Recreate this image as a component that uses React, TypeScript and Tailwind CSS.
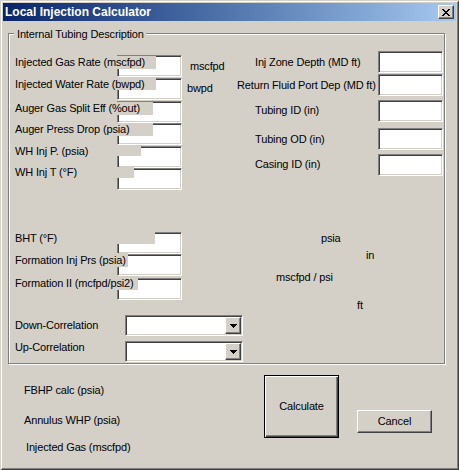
import React from "react";

const LBL = "relative z-10 bg-[#d4d0c8] whitespace-nowrap shrink-0";
const BOX =
  "bg-white border border-t-[#808080] border-l-[#808080] border-b-white border-r-white shadow-[inset_1px_1px_0_#404040,inset_-1px_-1px_0_#d4d0c8]";
const RAISED =
  "bg-[#d4d0c8] border border-t-white border-l-white border-b-[#404040] border-r-[#404040] shadow-[inset_-1px_-1px_0_#808080]";

function Combo() {
  return (
    <div className={`${BOX} w-[118px] h-[21px] flex shrink-0`}>
      <div className={`${RAISED} ml-auto mt-[1px] mr-[1px] w-[16px] h-[17px] flex items-center justify-center`}>
        <svg width="7" height="4" viewBox="0 0 7 4" shapeRendering="crispEdges">
          <path d="M0 0h7v1h-1v1h-1v1h-1v1h-1v-1h-1v-1h-1v-1h-1z" fill="#000" />
        </svg>
      </div>
    </div>
  );
}

export default function App() {
  return (
    <div className="w-[459px] h-[470px] box-border bg-[#d4d0c8] p-[3px] shadow-[inset_1px_1px_0_#d4d0c8,inset_-1px_-1px_0_#404040,inset_2px_2px_0_#ffffff,inset_-2px_-2px_0_#808080] text-[11px] tracking-[-0.15px] text-black font-['Liberation_Sans',Arial,sans-serif] flex flex-col">
      {/* Title bar */}
      <div className="h-[18px] flex items-center justify-between bg-linear-to-r from-[#0a246a] to-[#a6caf0] pl-[2px] pr-[2px]">
        <span className="text-white font-bold text-[12px] tracking-normal leading-[18px] whitespace-nowrap">
          Local Injection Calculator
        </span>
        <div className={`${RAISED} w-[16px] h-[14px] flex items-center justify-center`}>
          <svg width="8" height="7" viewBox="0 0 8 7" shapeRendering="crispEdges">
            <path
              d="M0 0h2v1h1v1h2v-1h1v-1h2v1h-1v1h-1v1h-1v1h1v1h1v1h1v1h-2v-1h-1v-1h-2v1h-1v1h-2v-1h1v-1h1v-1h1v-1h-1v-1h-1v-1h-1z"
              fill="#000"
            />
          </svg>
        </div>
      </div>

      {/* Frame */}
      <div className="relative mt-[12px] ml-[5px] w-[437px] h-[331px] box-border border border-[#808080] shadow-[inset_1px_1px_0_#ffffff,1px_1px_0_#ffffff] flex">
        <div className="absolute left-[5px] -top-[6px] bg-[#d4d0c8] pl-[3px] pr-[2px] leading-[13px] whitespace-nowrap">
          Internal Tubing Description
        </div>

        {/* Left column */}
        <div className="ml-[6px] mt-[21px] w-[222px] shrink-0 flex flex-col">
          <div className="flex items-start h-[23px]">
            <div className={`${LBL} mt-[1px] w-[141px] h-[13px] leading-[13px]`}>Injected Gas Rate (mscfpd)</div>
            <div className={`${BOX} -ml-[39px] w-[65px] h-[22px] shrink-0`} />
            <div className="ml-[8px] mt-[5px] leading-[13px] whitespace-nowrap">mscfpd</div>
          </div>
          <div className="flex items-start h-[23px]">
            <div className={`${LBL} w-[141px] h-[12px] leading-[12px]`}>Injected Water Rate (bwpd)</div>
            <div className={`${BOX} -ml-[39px] w-[65px] h-[22px] shrink-0`} />
            <div className="ml-[5px] mt-[4px] leading-[13px] whitespace-nowrap">bwpd</div>
          </div>
          <div className="flex items-start h-[22px]">
            <div className={`${LBL} mt-[1px] w-[138px] h-[13px] leading-[13px]`}>Auger Gas Split Eff (%out)</div>
            <div className={`${BOX} -ml-[36px] w-[65px] h-[22px] shrink-0`} />
          </div>
          <div className="flex items-start h-[23px]">
            <div className={`${LBL} w-[138px] h-[13px] leading-[13px]`}>Auger Press Drop (psia)</div>
            <div className={`${BOX} -ml-[36px] w-[65px] h-[22px] shrink-0`} />
          </div>
          <div className="flex items-start h-[21px]">
            <div className={`${LBL} w-[126px] h-[10px] leading-[10px]`}>WH Inj P. (psia)</div>
            <div className={`${BOX} -ml-[24px] w-[65px] h-[22px] shrink-0`} />
          </div>
          <div className="flex items-start h-[23px]">
            <div className={`${LBL} w-[119px] h-[11px] leading-[11px]`}>WH Inj T (°F)</div>
            <div className={`${BOX} -ml-[17px] mt-[1px] w-[65px] h-[22px] shrink-0`} />
          </div>

          <div className="flex items-start h-[21px] mt-[42px]">
            <div className={`${LBL} w-[140px] h-[12px] leading-[12px]`}>BHT (°F)</div>
            <div className={`${BOX} -ml-[38px] w-[65px] h-[22px] shrink-0`} />
          </div>
          <div className="flex items-start h-[24px]">
            <div className={`${LBL} w-[113px] h-[14px] leading-[14px]`}>Formation Inj Prs (psia)</div>
            <div className={`${BOX} -ml-[11px] mt-[1px] w-[65px] h-[22px] shrink-0`} />
          </div>
          <div className="flex items-start h-[23px]">
            <div className={`${LBL} w-[123px] h-[13px] leading-[13px]`}>Formation II (mcfpd/psi2)</div>
            <div className={`${BOX} -ml-[21px] mt-[1px] w-[65px] h-[22px] shrink-0`} />
          </div>

          <div className="flex items-start h-[26px] mt-[15px]">
            <div className="w-[110px] shrink-0 mt-[4px] leading-[13px] whitespace-nowrap">Down-Correlation</div>
            <Combo />
          </div>
          <div className="flex items-start h-[21px]">
            <div className="w-[110px] shrink-0 leading-[13px] whitespace-nowrap">Up-Correlation</div>
            <Combo />
          </div>
        </div>

        {/* Right column */}
        <div className="mt-[17px] w-[207px] shrink-0 flex flex-col">
          <div className="flex items-start h-[23px]">
            <div className="w-[141px] shrink-0 pl-[18px] mt-[5px] leading-[13px] whitespace-nowrap">Inj Zone Depth (MD ft)</div>
            <div className={`${BOX} w-[65px] h-[22px] shrink-0`} />
          </div>
          <div className="flex items-start h-[26px]">
            <div className="w-[141px] shrink-0 mt-[5px] leading-[13px] whitespace-nowrap">Return Fluid Port Dep (MD ft)</div>
            <div className={`${BOX} w-[65px] h-[22px] shrink-0`} />
          </div>
          <div className="flex items-start h-[28px]">
            <div className="w-[141px] shrink-0 pl-[18px] mt-[4px] leading-[13px] whitespace-nowrap">Tubing ID (in)</div>
            <div className={`${BOX} w-[65px] h-[22px] shrink-0`} />
          </div>
          <div className="flex items-start h-[26px]">
            <div className="w-[141px] shrink-0 pl-[18px] mt-[5px] leading-[13px] whitespace-nowrap">Tubing OD (in)</div>
            <div className={`${BOX} w-[65px] h-[22px] shrink-0`} />
          </div>
          <div className="flex items-start h-[22px]">
            <div className="w-[141px] shrink-0 pl-[18px] mt-[4px] leading-[13px] whitespace-nowrap">Casing ID (in)</div>
            <div className={`${BOX} w-[65px] h-[22px] shrink-0`} />
          </div>

          <div className="mt-[56px] ml-[84px] leading-[13px] whitespace-nowrap">psia</div>
          <div className="mt-[4px] ml-[129px] leading-[13px] whitespace-nowrap">in</div>
          <div className="mt-[9px] ml-[39px] leading-[13px] whitespace-nowrap">mscfpd / psi</div>
          <div className="mt-[15px] ml-[120px] leading-[13px] whitespace-nowrap">ft</div>
        </div>
      </div>

      {/* Bottom area */}
      <div className="flex items-start">
        <div className="w-[261px] shrink-0 pl-[21px] flex flex-col">
          <div className="mt-[20px] leading-[13px] whitespace-nowrap">FBHP calc (psia)</div>
          <div className="mt-[17px] leading-[13px] whitespace-nowrap">Annulus WHP (psia)</div>
          <div className="mt-[14px] ml-[2px] leading-[13px] whitespace-nowrap">Injected Gas (mscfpd)</div>
        </div>
        <button className="shrink-0 mt-[11px] w-[75px] h-[63px] box-border bg-[#d4d0c8] border border-black shadow-[inset_1px_1px_0_#ffffff,inset_-1px_-1px_0_#404040,inset_-2px_-2px_0_#808080] flex items-center justify-center leading-[13px]">
          Calculate
        </button>
        <button className={`${RAISED} shrink-0 ml-[18px] mt-[46px] w-[75px] h-[23px] box-border flex items-center justify-center leading-[13px]`}>
          Cancel
        </button>
      </div>
    </div>
  );
}
